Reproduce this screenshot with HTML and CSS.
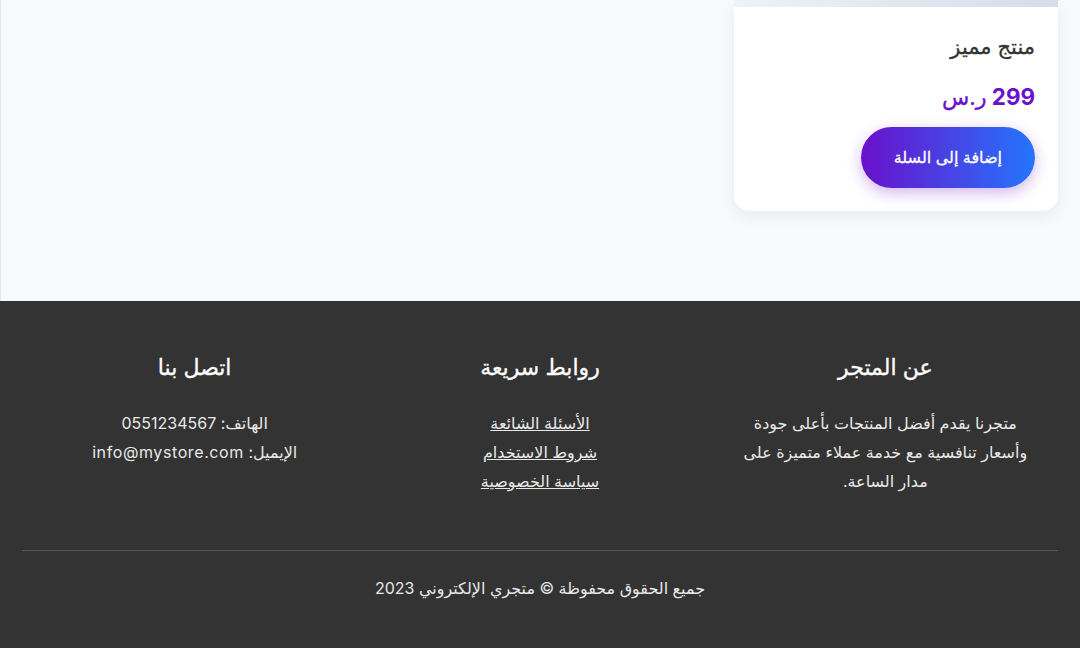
FILE: index.html
```html
<!DOCTYPE html>
<html lang="ar" dir="rtl">
<head>
<meta charset="utf-8">
<title>متجري الإلكتروني</title>
<link rel="stylesheet" href="styles.css">
</head>
<body>
<main class="products">
  <div class="grid">
    <div class="card">
      <div class="card-img"></div>
      <div class="card-body">
        <h3 class="card-title">منتج مميز</h3>
        <div class="price">299 <span class="currency">ر.س</span></div>
        <button class="btn">إضافة إلى السلة</button>
      </div>
    </div>
  </div>
</main>
<footer class="footer">
  <div class="cols">
    <div class="col">
      <h3>عن المتجر</h3>
      <p>متجرنا يقدم أفضل المنتجات بأعلى جودة وأسعار تنافسية مع خدمة عملاء متميزة على مدار الساعة.</p>
    </div>
    <div class="col">
      <h3>روابط سريعة</h3>
      <ul class="links">
        <li><a href="#">الأسئلة الشائعة</a></li>
        <li><a href="#">شروط الاستخدام</a></li>
        <li><a href="#">سياسة الخصوصية</a></li>
      </ul>
    </div>
    <div class="col">
      <h3>اتصل بنا</h3>
      <p class="contact">الهاتف: 0551234567<br>الإيميل: <span class="email">info@mystore.com</span></p>
    </div>
  </div>
  <div class="bottom">جميع الحقوق محفوظة © متجري الإلكتروني 2023</div>
</footer>
</body>
</html>
```
FILE: styles.css
```css
* { box-sizing: border-box; }
html, body { margin: 0; padding: 0; }
body {
  background: #f8f9fa;
  font-family: Inter, "DejaVu Sans", sans-serif;
  color: #333;
  direction: rtl;
}
.products {
  padding: 0 22px 90px;
  border-left: 1px solid #e6e8eb;
}
.grid {
  display: grid;
  grid-template-columns: repeat(3, 1fr);
  gap: 32px;
}
.card {
  background: #fff;
  border-radius: 0 0 15px 15px;
  box-shadow: 0 5px 15px rgba(0,0,0,0.06);
  overflow: hidden;
}
.card-img {
  height: 7px;
  background: linear-gradient(to left, #d6dde9, #eff2f7);
}
.card-body {
  padding: 24px 23px 23px;
}
.card-title {
  margin: 0 0 16px;
  font-size: 21px;
  line-height: 32px;
  font-weight: 400;
  -webkit-text-stroke: 0.3px currentColor;
  color: #333;
}
.price {
  font-size: 22.4px;
  line-height: 36px;
  font-weight: 700;
  color: #6a11cb;
  margin-bottom: 12px;
}
.currency {
  font-weight: 400;
  -webkit-text-stroke: 0.3px currentColor;
}
.btn {
  display: inline-block;
  border: 0;
  border-radius: 40px;
  padding: 19px 33px;
  font-family: inherit;
  font-size: 16px;
  line-height: 23px;
  font-weight: 400;
  -webkit-text-stroke: 0.3px currentColor;
  color: #fff;
  background: linear-gradient(to right, #6a11cb, #2575fc);
  box-shadow: 0 5px 15px rgba(106,17,203,0.3);
}
.footer {
  background: #333;
  color: #e8e8e8;
  padding: 50px 22px 60px;
}
.cols {
  display: grid;
  grid-template-columns: repeat(3, 1fr);
  text-align: center;
  padding-bottom: 55px;
}
.col {
  padding: 0 29px;
}
.col h3 {
  margin: 0 0 25px;
  font-size: 22px;
  line-height: 33px;
  font-weight: 400;
  -webkit-text-stroke: 0.3px currentColor;
  color: #fff;
}
.col p {
  margin: 0;
  font-size: 16px;
  line-height: 28.8px;
}
.email {
  letter-spacing: 0.6px;
}
.links {
  list-style: none;
  margin: 0;
  padding: 0;
  font-size: 16px;
  line-height: 28.8px;
}
.links a {
  color: #e8e8e8;
  text-decoration: underline;
}
.bottom {
  border-top: 1px solid #555;
  padding-top: 23px;
  text-align: center;
  font-size: 16px;
  line-height: 28.8px;
}
```
